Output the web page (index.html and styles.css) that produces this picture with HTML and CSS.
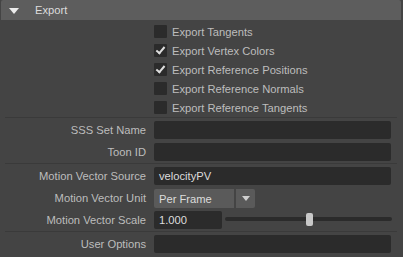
FILE: index.html
```html
<!DOCTYPE html>
<html lang="en">

<head>
    <meta charset="UTF-8">
    <title>Export</title>
    <link rel="stylesheet" href="styles.css">
</head>

<body>
    <div class="section">
        <div class="section-header">
            <span class="arrow"></span>
            <span class="section-title">Export</span>
        </div>

        <div class="checks">
            <label class="check-row"><span class="box"></span>Export Tangents</label>
            <label class="check-row"><span class="box checked"></span>Export Vertex Colors</label>
            <label class="check-row"><span class="box checked"></span>Export Reference Positions</label>
            <label class="check-row"><span class="box"></span>Export Reference Normals</label>
            <label class="check-row"><span class="box"></span>Export Reference Tangents</label>
        </div>
        <div class="sep"></div>

        <div class="row">
            <div class="label">SSS Set Name</div>
            <div class="field"></div>
        </div>
        <div class="row">
            <div class="label">Toon ID</div>
            <div class="field"></div>
        </div>
        <div class="sep"></div>

        <div class="row">
            <div class="label">Motion Vector Source</div>
            <div class="field">velocityPV</div>
        </div>
        <div class="row">
            <div class="label">Motion Vector Unit</div>
            <div class="dropdown">
                <div class="dropdown-value">Per Frame</div>
                <div class="dropdown-btn"><span class="caret"></span></div>
            </div>
        </div>
        <div class="row">
            <div class="label">Motion Vector Scale</div>
            <div class="slider-group">
                <div class="field small">1.000</div>
                <div class="slider">
                    <div class="track"></div>
                    <div class="thumb"></div>
                </div>
            </div>
        </div>
        <div class="sep"></div>

        <div class="row">
            <div class="label">User Options</div>
            <div class="field"></div>
        </div>
    </div>
</body>

</html>
```

FILE: styles.css
```css
body {
    margin: 0;
    padding: 0;
    background-color: #444444;
    font-family: 'Liberation Sans', Arial, sans-serif;
    font-size: 11.2px;
    color: #bdbdbd;
}

.section {
    width: 403px;
}

.section-header {
    height: 20px;
    margin: 0 2px 0 1px;
    background-color: #5d5d5d;
    border-radius: 2px 2px 0 0;
    display: flex;
    align-items: center;
}

.arrow {
    width: 0;
    height: 0;
    margin-left: 8px;
    margin-top: 1px;
    border-left: 5.5px solid transparent;
    border-right: 5.5px solid transparent;
    border-top: 6px solid #ececec;
}

.section-title {
    margin-left: 16px;
    color: #dcdcdc;
}

.checks {
    padding-top: 2px;
}

.check-row {
    height: 19px;
    display: flex;
    align-items: center;
    padding-left: 154px;
}

.box {
    width: 13px;
    height: 13px;
    background-color: #2b2b2b;
    border-radius: 1px;
    margin-right: 5px;
    position: relative;
}

.box.checked::after {
    content: '';
    position: absolute;
    left: 4px;
    top: 1px;
    width: 3px;
    height: 7px;
    border-right: 2px solid #dedede;
    border-bottom: 2px solid #dedede;
    transform: rotate(40deg);
}

.sep {
    height: 1px;
    margin: 0 6px 1px 5px;
    background-color: #3a3a3a;
}

.row {
    height: 22px;
    display: grid;
    grid-template-columns: 146px 237px;
    column-gap: 8px;
    align-items: center;
}

.label {
    text-align: right;
    white-space: nowrap;
}

.field {
    height: 18px;
    line-height: 18px;
    background-color: #2b2b2b;
    border-radius: 2px;
    padding-left: 5px;
    color: #dcdcdc;
    box-sizing: border-box;
}

.field.small {
    width: 68px;
    flex: none;
}

.dropdown {
    display: flex;
    gap: 2px;
    height: 19px;
}

.dropdown-value {
    width: 80px;
    background-color: #5a5a5a;
    border-radius: 2px 0 0 2px;
    padding-left: 5px;
    line-height: 20px;
    color: #dcdcdc;
    box-sizing: border-box;
}

.dropdown-btn {
    width: 19px;
    background-color: #5a5a5a;
    border-radius: 0 2px 2px 0;
    display: flex;
    align-items: center;
    justify-content: center;
}

.caret {
    width: 0;
    height: 0;
    border-left: 4.5px solid transparent;
    border-right: 4.5px solid transparent;
    border-top: 5px solid #cfcfcf;
}

.slider-group {
    display: flex;
    align-items: center;
}

.slider {
    position: relative;
    flex: 1;
    height: 18px;
    margin-left: 3px;
    margin-right: -1px;
}

.track {
    position: absolute;
    left: 0;
    right: 0;
    top: 6px;
    height: 4px;
    background-color: #2b2b2b;
    border-radius: 2px;
}

.thumb {
    position: absolute;
    left: 81px;
    top: 2px;
    width: 7px;
    height: 13px;
    background-color: #c8c8c8;
    border-radius: 2px;
}
```
